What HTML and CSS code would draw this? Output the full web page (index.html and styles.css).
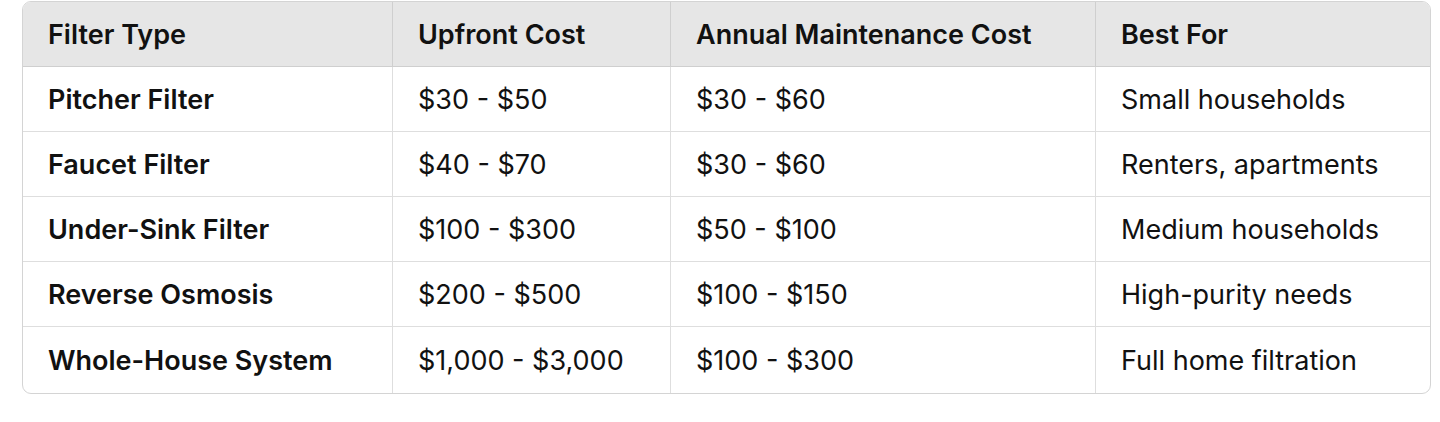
FILE: index.html
```html
<!DOCTYPE html>
<html lang="en">
<head>
<meta charset="utf-8">
<link rel="stylesheet" href="styles.css">
</head>
<body>
<div class="table-wrap">
  <table class="cmp">
    <colgroup>
      <col class="c1"><col class="c2"><col class="c3"><col class="c4">
    </colgroup>
    <thead>
      <tr><th>Filter Type</th><th>Upfront Cost</th><th>Annual Maintenance Cost</th><th>Best For</th></tr>
    </thead>
    <tbody>
      <tr><td class="name">Pitcher Filter</td><td>$30 - $50</td><td>$30 - $60</td><td>Small households</td></tr>
      <tr><td class="name">Faucet Filter</td><td>$40 - $70</td><td>$30 - $60</td><td>Renters, apartments</td></tr>
      <tr><td class="name">Under-Sink Filter</td><td>$100 - $300</td><td>$50 - $100</td><td>Medium households</td></tr>
      <tr><td class="name">Reverse Osmosis</td><td>$200 - $500</td><td>$100 - $150</td><td>High-purity needs</td></tr>
      <tr><td class="name">Whole-House System</td><td>$1,000 - $3,000</td><td>$100 - $300</td><td>Full home filtration</td></tr>
    </tbody>
  </table>
</div>
</body>
</html>
```
FILE: styles.css
```css
html, body {
  margin: 0;
  background: #ffffff;
}
body {
  padding: 1px 9px 0 22px;
  font-family: Inter, "Noto Sans", sans-serif;
  color: #111111;
}
.table-wrap {
  border: 1px solid #d4d4d4;
  border-radius: 9px;
  overflow: hidden;
}
.cmp {
  width: 100%;
  table-layout: fixed;
  border-collapse: separate;
  border-spacing: 0;
  font-size: 27px;
}
.c1 { width: 370px; }
.c2 { width: 278px; }
.c3 { width: 425px; }
.c4 { width: 334px; }
.cmp th, .cmp td {
  height: 65px;
  padding: 0 0 0 25px;
  text-align: left;
  vertical-align: middle;
  box-sizing: border-box;
  border-right: 1px solid #dedede;
  border-bottom: 1px solid #dedede;
  white-space: nowrap;
}
.cmp th {
  background: #e6e6e6;
  font-weight: 600;
  border-right-color: #cfcfcf;
  border-bottom-color: #cfcfcf;
}
.cmp tr > :last-child { border-right: none; }
.cmp tbody tr:last-child td { border-bottom: none; height: 66px; }
.cmp td { font-weight: 400; }
.cmp td.name { font-weight: 600; }
```
